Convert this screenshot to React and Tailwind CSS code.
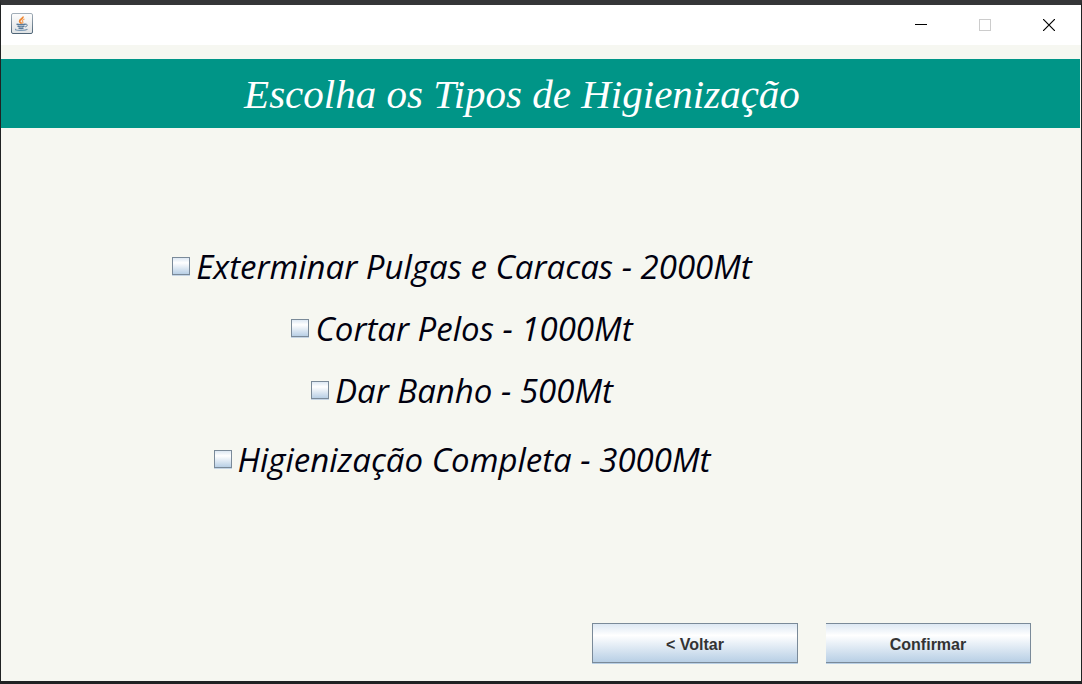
const options = [
  { id: "pulgas", label: "Exterminar Pulgas e Caracas - 2000Mt", row: "h-[62px]" },
  { id: "pelos", label: "Cortar Pelos - 1000Mt", row: "h-[62px]" },
  { id: "banho", label: "Dar Banho - 500Mt", row: "h-[62px]" },
  { id: "completa", label: "Higienização Completa - 3000Mt", row: "mt-[7px] h-[62px]" },
];

function JavaIcon() {
  return (
    <svg width="22" height="22" viewBox="0 0 22 22" aria-hidden="true">
      <defs>
        <linearGradient id="tile" x1="0" y1="0" x2="0" y2="1">
          <stop offset="0" stopColor="#fdfdfd" />
          <stop offset="1" stopColor="#dfe2e4" />
        </linearGradient>
        <linearGradient id="rim" x1="0" y1="0" x2="0" y2="1">
          <stop offset="0" stopColor="#a3afb9" />
          <stop offset="1" stopColor="#4f6577" />
        </linearGradient>
      </defs>
      <rect x="0.5" y="0.5" width="21" height="20" rx="1.5" fill="url(#tile)" stroke="url(#rim)" />
      <path d="M12 3.5c.6 2-3.6 2.800-3.400 4.800.1 1 1.400 1.700 2 2.500" fill="none" stroke="#ef8630" strokeWidth="1.700" />
      <path d="M13.500 6c-1.800.7-2.700 1.500-1.900 2.500.5.7.4 1.400-.3 2" fill="none" stroke="#f4a565" strokeWidth="1.300" />
      <path d="M5.500 11.200c2 .7 7 .7 9 0M6.500 13.200c2 .7 5.200.7 7 0M7.500 15.200c1.600.5 3.700.5 5 0" fill="none" stroke="#587a9a" strokeWidth="1.400" />
      <path d="M14 11.300c3.200-.7 2.700 2.200.2 2.600" fill="none" stroke="#587a9a" />
      <path d="M5 16c-3 1.500 8.500 2.200 11.500.2" fill="none" stroke="#7c9ab5" strokeWidth="1.200" />
    </svg>
  );
}

function TitleBar() {
  return (
    <header className="flex h-10 shrink-0 items-center justify-between bg-white pb-0.5 pl-2.5">
      <JavaIcon />
      <div className="flex h-10 pt-0.5">
        <button type="button" aria-label="Minimizar" className="flex w-16 items-center justify-center">
          <svg width="12" height="12" viewBox="0 0 12 12" shapeRendering="crispEdges">
            <path d="M0 5.500h12" stroke="#000" />
          </svg>
        </button>
        <button type="button" aria-label="Maximizar" disabled className="flex w-16 items-center justify-center">
          <svg width="12" height="12" viewBox="0 0 12 12" shapeRendering="crispEdges">
            <rect x="0.5" y="0.5" width="11" height="11" fill="none" stroke="#ccc" />
          </svg>
        </button>
        <button type="button" aria-label="Fechar" className="flex w-16 items-center justify-center">
          <svg width="12" height="12" viewBox="0 0 12 12">
            <path d="M0 0l12 12M12 0L0 12" stroke="#000" strokeWidth="1.200" />
          </svg>
        </button>
      </div>
    </header>
  );
}

function Option({ id, label, row }) {
  return (
    <div className={`flex items-center gap-1.5 ${row}`}>
      <input
        id={id}
        type="checkbox"
        className="size-[18px] shrink-0 appearance-none border border-[#7a8a99] bg-linear-to-b from-[#dde8f3] via-white via-30% to-[#b8cfe5] shadow-[0_1px_0_#c5d5e5] checked:to-[#7a9abf]"
      />
      <label htmlFor={id} className="pt-0.5 font-['Open_Sans','Noto_Sans',sans-serif] text-[33px] leading-10 whitespace-nowrap text-[#00000f] italic">
        {label}
      </label>
    </div>
  );
}

const buttonStyle =
  "h-10 border-[#7a8a99] bg-linear-to-b from-[#dde8f3] via-white via-30% to-[#b8cfe5] pt-1 font-['Liberation_Sans',Arial,sans-serif] text-base font-bold text-[#333] shadow-[0_1px_0_#b8cfe5]";

export default function App() {
  return (
    <div className="flex min-h-screen flex-col border-t-[5px] border-r border-b-[3px] border-l border-t-[#353638] border-r-[#202223] border-b-[#202223] border-l-[#202223] bg-[#f6f7f1]">
      <TitleBar />
      <div className="mt-3.5 mr-px flex h-[69px] items-center justify-center bg-[#009587] pr-[37px]">
        <h1 className="font-['Liberation_Serif','Times_New_Roman',serif] text-[41px] leading-[48px] whitespace-nowrap text-white italic">
          Escolha os Tipos de Higienização
        </h1>
      </div>
      <main className="flex flex-1 flex-col">
        <fieldset aria-label="Tipos de Higienização" className="flex flex-col items-center pt-[107px] pr-[158px]">
          {options.map((option) => (
            <Option key={option.id} {...option} />
          ))}
        </fieldset>
        <div className="mt-auto flex justify-end gap-7 pr-[50px] pb-[18px]">
          <button type="button" className={`${buttonStyle} w-[206px] border`}>
            &lt; Voltar
          </button>
          <button type="button" className={`${buttonStyle} w-[205px] border-y border-r`}>
            Confirmar
          </button>
        </div>
      </main>
    </div>
  );
}
